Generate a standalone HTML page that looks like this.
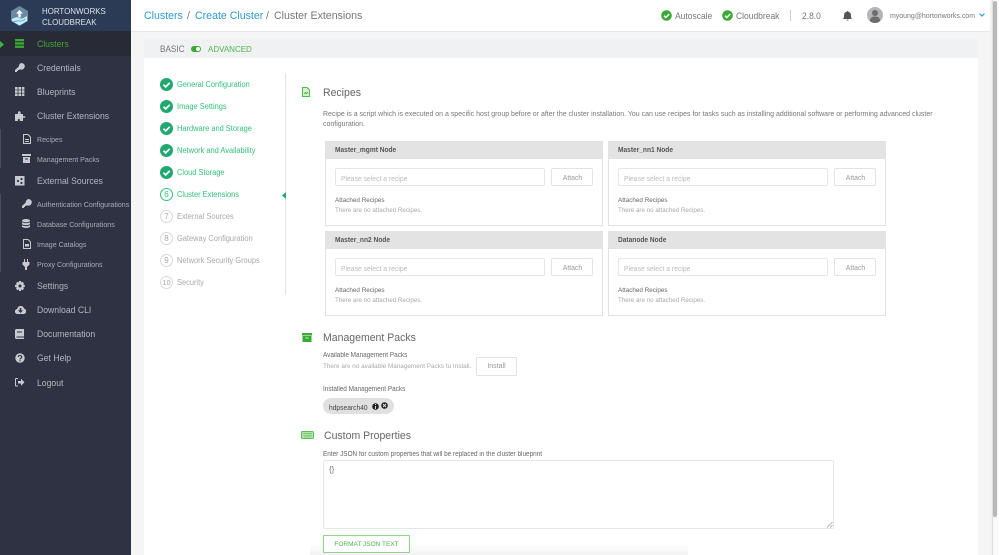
<!DOCTYPE html>
<html><head><meta charset="utf-8"><style>
html,body{margin:0;padding:0;width:999px;height:555px;overflow:hidden;background:#f5f5f5;font-family:"Liberation Sans",sans-serif}
#w{position:absolute;left:0;top:0;width:999px;height:555px;overflow:hidden;filter:blur(.3px)}
.a,.t{position:absolute}
.t{white-space:nowrap;line-height:1;transform:scaleX(.93);transform-origin:0 50%}
.nav{color:#b4b6bd;font-size:9.300px;left:37px}
.sub{color:#a9abb3;font-size:7.600px;left:37px}
.st{font-size:8px;left:177px}
.g{color:#35bf7c}.q{color:#a9a9a9}
.c{position:absolute;left:160px;width:13px;height:13px;border-radius:50%;background:#1fa971}
.n{position:absolute;left:160px;width:11px;height:11px;border:1px solid #d8d8d8;border-radius:50%;background:#fff;color:#a9a9a9;font-size:8px;line-height:11px;text-align:center}
.card{position:absolute;width:276px;height:83px;background:#fff;border:1px solid #e2e2e2}
.card span{display:inline-block;transform:scaleX(.93)}
.card .h{position:absolute;left:0;top:0;right:0;height:17px;background:#e3e3e3;color:#555;font-size:7.100px;font-weight:bold;line-height:17px;padding-left:9px}
.card .h span,.card .i span{transform-origin:0 50%}
.card .i{position:absolute;left:9px;top:26px;width:203px;height:16px;border:1px solid #e6e6e6;border-radius:2px;color:#bbb;font-size:7.300px;line-height:19px;padding-left:5px;box-sizing:content-box;background:#fff}
.card .b{position:absolute;left:225px;top:26px;width:40px;height:16px;border:1px solid #e3e3e3;border-radius:2px;color:#999;font-size:7.400px;line-height:17px;text-align:center}
.card .l{position:absolute;left:9px;top:55px;color:#666;font-size:6.800px;line-height:8px;white-space:nowrap;transform:scaleX(.93);transform-origin:0 50%}
.card .m{position:absolute;left:9px;top:65px;color:#a8a8a8;font-size:6.700px;line-height:8px;white-space:nowrap;transform:scaleX(.93);transform-origin:0 50%}
svg{position:absolute;display:block}
</style></head><body><div id="w">
<div class="a" style="left:0;top:0;width:131px;height:555px;background:#2f3243"></div>
<div class="a" style="left:0;top:0;width:131px;height:31px;background:#2b3a55"></div>
<div class="a" style="left:0;top:31px;width:131px;height:25px;background:#282a35"></div>
<div class="a" style="left:0;top:129px;width:1px;height:39px;background:#4a4d5c"></div>
<div class="a" style="left:0;top:194px;width:1px;height:78px;background:#4a4d5c"></div>
<svg style="left:10px;top:5px" width="19" height="22" viewBox="0 0 19 22"><path d="M9.500 1L18 6v10l-8.500 5L1 16V6z" fill="#6a8aa3"/><path d="M2 14q5-3 7-1t8-2l0 5-7.500 4.500L2 16z" fill="#c9ecfa"/><path d="M3.500 17q5-2 6-1t6-2" stroke="#4aa8de" fill="none"/><path d="M9.500 5l-3.500 3.500h2.300v4h2.400v-4H13z" fill="#fff"/></svg>
<div class="t" style="left:42px;top:7px;color:#dfe2e8;font-size:8.500px">HORTONWORKS</div>
<div class="t" style="left:42px;top:18px;color:#dfe2e8;font-size:8.500px">CLOUDBREAK</div>
<svg style="left:0;top:41px" width="4" height="7"><path d="M0 0l4 3.500L0 7z" fill="#39b54a"/></svg>
<svg style="left:15px;top:39px" width="10" height="9"><path d="M0 0h9v2.300H0zM0 3.300h9v2.300H0zM0 6.600h9v2.300H0z" fill="#3aaa35"/></svg>
<div class="t nav" style="top:40px;color:#3fa535">Clusters</div>
<svg style="left:15px;top:63px" width="10" height="10" viewBox="0 0 10 10"><path d="M6.500 0a3.300 3.300 0 1 1-1.600 6.200L4 7H3v1H2v1H0V7l3.800-3.500A3.300 3.300 0 0 1 6.500 0z" fill="#c8cacf"/></svg>
<div class="t nav" style="top:64px">Credentials</div>
<svg style="left:15px;top:87px" width="10" height="9"><path d="M0 0h2.600v2.600H0zM3.400 0H6v2.600H3.400zM6.800 0h2.600v2.600H6.800zM0 3.300h2.600v2.600H0zM3.400 3.300H6v2.600H3.400zM6.800 3.300h2.600v2.600H6.800zM0 6.500h2.600v2.500H0zM3.400 6.500H6v2.500H3.400zM6.800 6.500h2.600v2.500H6.800z" fill="#c8cacf"/></svg>
<div class="t nav" style="top:88px">Blueprints</div>
<svg style="left:15px;top:111px" width="11" height="10" viewBox="0 0 11 10"><path d="M0 3h3V1.500a1.300 1.300 0 0 1 2.600 0V3h2.400v2.300h2.200v1.400H8V10H4.800V8.500a1 1 0 0 0-1.800 0V10H0z" fill="#c8cacf"/></svg>
<div class="t nav" style="top:112px">Cluster Extensions</div>
<svg style="left:23px;top:134px" width="8" height="10"><path d="M.500.500h4.500l2.500 2.500v6.500h-7z" fill="none" stroke="#c8cacf"/><path d="M2 5h4v1H2zM2 7h4v1H2z" fill="#c8cacf"/></svg>
<div class="t sub" style="top:136px">Recipes</div>
<svg style="left:22px;top:154px" width="10" height="9"><path d="M0 0h9v2H0zM1 3h7v6H1z" fill="#c8cacf"/><path d="M3 4.500h3v1H3z" fill="#2d3142"/></svg>
<div class="t sub" style="top:156px">Management Packs</div>
<svg style="left:15px;top:176px" width="10" height="10"><path d="M0 0h9.500v9.500H0z" fill="#c8cacf"/><circle cx="3" cy="5" r="1.100" fill="#2d3142"/><circle cx="6.500" cy="3" r="1.100" fill="#2d3142"/><circle cx="6.500" cy="7" r="1.100" fill="#2d3142"/></svg>
<div class="t nav" style="top:177px">External Sources</div>
<svg style="left:22px;top:199px" width="10" height="10" viewBox="0 0 10 10"><path d="M6.500 0a3.300 3.300 0 1 1-1.600 6.200L4 7H3v1H2v1H0V7l3.800-3.500A3.300 3.300 0 0 1 6.500 0z" fill="#c8cacf"/></svg>
<div class="t sub" style="top:201px">Authentication Configurations</div>
<svg style="left:22px;top:219px" width="9" height="10"><ellipse cx="4" cy="1.700" rx="4" ry="1.700" fill="#c8cacf"/><path d="M0 3.200q4 2 8 0v2q-4 2-8 0zM0 6.200q4 2 8 0v1.800q-4 2-8 0z" fill="#c8cacf"/></svg>
<div class="t sub" style="top:221px">Database Configurations</div>
<svg style="left:23px;top:239px" width="8" height="10"><path d="M.500.500h4.500l2.500 2.500v6.500h-7z" fill="none" stroke="#c8cacf"/><path d="M2 5h4v2.500H2z" fill="#c8cacf"/></svg>
<div class="t sub" style="top:241px">Image Catalogs</div>
<svg style="left:22px;top:259px" width="8" height="11"><path d="M2 0h1v3H2zM5 0h1v3H5zM.500 3h7v2.500L5 8v3H3V8L.500 5.500z" fill="#c8cacf"/></svg>
<div class="t sub" style="top:261px">Proxy Configurations</div>
<svg style="left:15px;top:281px" width="10" height="10" viewBox="0 0 10 10"><path d="M4 0h2l.3 1.500 1.300-.6 1.400 1.400-.7 1.300 1.500.4v2l-1.500.4.700 1.300-1.400 1.400-1.300-.7L6 10H4l-.3-1.600-1.300.7L1 7.700l.7-1.300L0 6V4l1.700-.4L1 2.300 2.400.9l1.300.6z" fill="#c8cacf"/><circle cx="5" cy="5" r="1.500" fill="#2d3142"/></svg>
<div class="t nav" style="top:282px">Settings</div>
<svg style="left:15px;top:305px" width="11" height="9" viewBox="0 0 11 9"><path d="M2.500 9a2.500 2.500 0 0 1-.3-5A3.500 3.500 0 0 1 9 3.500 2.800 2.800 0 0 1 8.500 9z" fill="#c8cacf"/><path d="M4.700 3h1.600v2.300H8L5.500 8 3 5.300h1.700z" fill="#2d3142"/></svg>
<div class="t nav" style="top:306px">Download CLI</div>
<svg style="left:15px;top:329px" width="9" height="10"><path d="M1.500 0H9v10H1.500A1.500 1.500 0 0 1 0 8.500v-7A1.500 1.500 0 0 1 1.500 0z" fill="#c8cacf"/><path d="M2 2.500h5v1H2zM1.500 7.500H9v1H1.500z" fill="#2d3142"/></svg>
<div class="t nav" style="top:330px">Documentation</div>
<svg style="left:15px;top:353px" width="10" height="10"><circle cx="5" cy="5" r="4.700" fill="#c8cacf"/><path d="M3.300 4a1.700 1.500 0 1 1 2.500 1.300Q5 5.800 5 6.500" fill="none" stroke="#2d3142" stroke-width="1.100"/><path d="M4.400 7.200h1.200v1.200H4.400z" fill="#2d3142"/></svg>
<div class="t nav" style="top:354px">Get Help</div>
<svg style="left:15px;top:378px" width="10" height="9"><path d="M3 .500H1a.600.600 0 0 0-.500.500v6.500a.600.600 0 0 0 .500.500h2" fill="none" stroke="#c8cacf"/><path d="M3 3h3V.800l3.500 3.500L6 7.800V5.500H3z" fill="#c8cacf"/></svg>
<div class="t nav" style="top:379px">Logout</div>

<div class="a" style="left:131px;top:0;width:859px;height:31px;background:#fff;border-bottom:1px solid #e8e8e8"></div>
<div class="t" style="left:144px;top:10.500px;font-size:11.400px;color:#2f9bd0">Clusters</div>
<div class="t" style="left:187px;top:10.500px;font-size:11.400px;color:#777">/</div>
<div class="t" style="left:195px;top:10.500px;font-size:11.400px;color:#2f9bd0">Create Cluster</div>
<div class="t" style="left:266px;top:10.500px;font-size:11.400px;color:#777">/</div>
<div class="t" style="left:274px;top:10.500px;font-size:11.400px;color:#777">Cluster Extensions</div>
<svg style="left:661px;top:10px" width="11" height="11"><circle cx="5.500" cy="5.500" r="5.300" fill="#3aaa35"/><path d="M3 5.700l1.800 1.800L8.200 4" fill="none" stroke="#fff" stroke-width="1.500"/></svg>
<div class="t" style="left:675px;top:11.500px;font-size:9.150px;color:#777">Autoscale</div>
<svg style="left:722px;top:10px" width="11" height="11"><circle cx="5.500" cy="5.500" r="5.300" fill="#3aaa35"/><path d="M3 5.700l1.800 1.800L8.200 4" fill="none" stroke="#fff" stroke-width="1.500"/></svg>
<div class="t" style="left:736px;top:11.500px;font-size:9.150px;color:#777">Cloudbreak</div>
<div class="a" style="left:790px;top:10px;width:1px;height:11px;background:#ccc"></div>
<div class="t" style="left:802px;top:11.500px;font-size:9.150px;color:#777">2.8.0</div>
<svg style="left:843px;top:11px" width="9" height="10"><path d="M4.500 0q.8 0 .8.800Q8 1.500 8 4.500q0 2.500 1 3.500H0q1-1 1-3.500Q1 1.500 3.700.8 3.700 0 4.500 0zM3.300 8.600h2.400q-.3 1-1.200 1t-1.200-1z" fill="#555"/></svg>
<svg style="left:867px;top:7px" width="16" height="16"><circle cx="8" cy="8" r="8" fill="#b5b5b8"/><circle cx="8" cy="6" r="3" fill="#6d6d70"/><path d="M2.800 14q.2-4.500 5.200-4.500t5.200 4.500Q11 16 8 16t-5.200-2z" fill="#6d6d70"/></svg>
<div class="t" style="left:890px;top:11.500px;font-size:7.500px;color:#777">myoung@hortonworks.com</div>
<svg style="left:979px;top:13px" width="6" height="4"><path d="M.500.500L3 3 5.500.500" fill="none" stroke="#2f9bd0" stroke-width="1.200"/></svg>

<div class="a" style="left:990px;top:0;width:2px;height:555px;background:#f1f1f1"></div>
<div class="a" style="left:992px;top:0;width:7px;height:555px;background:#fafafa;border-left:1px solid #ddd;box-sizing:border-box"></div>
<div class="a" style="left:993px;top:1px;width:4px;height:516px;background:#b8b8b8;border-radius:2px"></div>

<div class="a" style="left:144px;top:39px;width:834px;height:19px;background:#f0f1f3"></div>
<div class="a" style="left:144px;top:58px;width:834px;height:497px;background:#fff"></div>
<div class="a" style="left:310px;top:544px;width:378px;height:11px;background:linear-gradient(to bottom,rgba(242,242,242,0),#f2f2f2)"></div>
<div class="t" style="left:160px;top:45px;font-size:8.800px;color:#777">BASIC</div>
<div class="a" style="left:191px;top:46px;width:10px;height:6px;background:#3aaa35;border-radius:3px"></div>
<div class="a" style="left:196px;top:47px;width:4px;height:4px;background:#fff;border-radius:2px"></div>
<div class="t" style="left:208px;top:45px;font-size:8.600px;color:#4db748">ADVANCED</div>
<div class="a" style="left:285px;top:73px;width:1px;height:222px;background:#e4e4e4"></div>
<svg style="left:282px;top:192px" width="4" height="7"><path d="M4 0L0 3.500 4 7z" fill="#1fa971"/></svg>

<div class="c" style="top:78px"><svg width="13" height="13"><path d="M3.500 6.800l2.200 2.100 4-4" fill="none" stroke="#fff" stroke-width="1.700"/></svg></div>
<div class="t st g" style="top:81px">General Configuration</div>
<div class="c" style="top:100px"><svg width="13" height="13"><path d="M3.500 6.800l2.200 2.100 4-4" fill="none" stroke="#fff" stroke-width="1.700"/></svg></div>
<div class="t st g" style="top:103px">Image Settings</div>
<div class="c" style="top:122px"><svg width="13" height="13"><path d="M3.500 6.800l2.200 2.100 4-4" fill="none" stroke="#fff" stroke-width="1.700"/></svg></div>
<div class="t st g" style="top:125px">Hardware and Storage</div>
<div class="c" style="top:144px"><svg width="13" height="13"><path d="M3.500 6.800l2.200 2.100 4-4" fill="none" stroke="#fff" stroke-width="1.700"/></svg></div>
<div class="t st g" style="top:147px">Network and Availability</div>
<div class="c" style="top:166px"><svg width="13" height="13"><path d="M3.500 6.800l2.200 2.100 4-4" fill="none" stroke="#fff" stroke-width="1.700"/></svg></div>
<div class="t st g" style="top:169px">Cloud Storage</div>
<div class="n" style="top:188px;border-color:#35bf7c;color:#35bf7c">6</div>
<div class="t st g" style="top:191px">Cluster Extensions</div>
<div class="n" style="top:210px">7</div>
<div class="t st q" style="top:213px">External Sources</div>
<div class="n" style="top:232px">8</div>
<div class="t st q" style="top:235px">Gateway Configuration</div>
<div class="n" style="top:254px">9</div>
<div class="t st q" style="top:257px">Network Security Groups</div>
<div class="n" style="top:276px;font-size:7.500px">10</div>
<div class="t st q" style="top:279px">Security</div>

<svg style="left:302px;top:87px" width="8" height="10"><path d="M.500.500h4.500l2.500 2.500v6.500h-7z" fill="#d8f0d4" stroke="#4db748"/><path d="M2 7l1.500-1.500 1 1L6 5" fill="none" stroke="#4db748"/></svg>
<div class="t" style="left:323px;top:88px;font-size:11.300px;color:#666">Recipes</div>
<div class="t" style="left:323px;top:110px;font-size:7.530px;color:#777">Recipe is a script which is executed on a specific host group before or after the cluster installation. You can use recipes for tasks such as installing additional software or performing advanced cluster</div>
<div class="t" style="left:323px;top:120px;font-size:7.530px;color:#777">configuration.</div>

<div class="card" style="left:325px;top:141px"><div class="h"><span>Master_mgmt Node</span></div><div class="i"><span>Please select a recipe</span></div><div class="b"><span>Attach</span></div><div class="l">Attached Recipes</div><div class="m">There are no attached Recipes.</div></div>
<div class="card" style="left:608px;top:141px"><div class="h"><span>Master_nn1 Node</span></div><div class="i"><span>Please select a recipe</span></div><div class="b"><span>Attach</span></div><div class="l">Attached Recipes</div><div class="m">There are no attached Recipes.</div></div>
<div class="card" style="left:325px;top:231px"><div class="h"><span>Master_nn2 Node</span></div><div class="i"><span>Please select a recipe</span></div><div class="b"><span>Attach</span></div><div class="l">Attached Recipes</div><div class="m">There are no attached Recipes.</div></div>
<div class="card" style="left:608px;top:231px"><div class="h"><span>Datanode Node</span></div><div class="i"><span>Please select a recipe</span></div><div class="b"><span>Attach</span></div><div class="l">Attached Recipes</div><div class="m">There are no attached Recipes.</div></div>

<svg style="left:302px;top:333px" width="10" height="9"><path d="M0 0h10v2.500H0z" fill="#3aaa35"/><path d="M.500 3H9.500v6H.500z" fill="#3aaa35"/><path d="M3.500 4.500h3v1h-3z" fill="#d8f0d4"/></svg>
<div class="t" style="left:323px;top:332.500px;font-size:11.300px;color:#666">Management Packs</div>
<div class="t" style="left:323px;top:353px;font-size:6.900px;color:#666">Available Management Packs</div>
<div class="t" style="left:323px;top:363.500px;font-size:6.830px;color:#a8a8a8">There are no available Management Packs to Install.</div>
<div class="a" style="left:476px;top:357px;width:39px;height:17px;border:1px solid #e3e3e3;border-radius:1px;color:#999;font-size:7px;line-height:18px;text-align:center">Install</div>
<div class="t" style="left:323px;top:386.500px;font-size:6.900px;color:#666">Installed Management Packs</div>
<div class="a" style="left:323px;top:398px;width:71px;height:16px;background:#e0e0e0;border-radius:8px"></div>
<div class="t" style="left:329px;top:403.500px;font-size:7.200px;color:#444">hdpsearch40</div>
<svg style="left:372px;top:403px" width="7" height="7"><circle cx="3.500" cy="3.500" r="3.300" fill="#222"/><path d="M3 1h1v1H3zM3 3h1v3H3z" fill="#ddd"/></svg>
<svg style="left:381px;top:402px" width="7" height="7"><circle cx="3.500" cy="3.500" r="3.300" fill="#222"/><path d="M2 2l3 3M5 2L2 5" stroke="#ddd"/></svg>

<svg style="left:301px;top:431px" width="13" height="8"><rect x=".5" y=".5" width="12" height="7" rx="1" fill="#b5e3ae" stroke="#5cbf57"/><path d="M2 2h9v1H2zM2 4h9v.800H2zM3 5.500h7v.800H3z" fill="#4db748" opacity=".6"/></svg>
<div class="t" style="left:324px;top:431px;font-size:11.300px;color:#666">Custom Properties</div>
<div class="t" style="left:323px;top:452px;font-size:6.900px;color:#666">Enter JSON for custom properties that will be replaced in the cluster blueprint</div>
<div class="a" style="left:323px;top:460px;width:509px;height:67px;border:1px solid #e6e6e6;border-radius:2px;background:#fff"></div>
<div class="t" style="left:329px;top:465px;font-size:8.600px;color:#777">{}</div>
<svg style="left:827px;top:522px" width="6" height="6"><path d="M0 5.500L5.500 0M3 5.500L5.500 3" stroke="#999" stroke-width=".7"/></svg>
<div class="a" style="left:323px;top:535px;width:85px;height:16px;border:1px solid #8dd488;border-radius:1px;background:#fff;color:#4db748;font-size:6.500px;line-height:17px;text-align:center">FORMAT JSON TEXT</div>
</div></body></html>
